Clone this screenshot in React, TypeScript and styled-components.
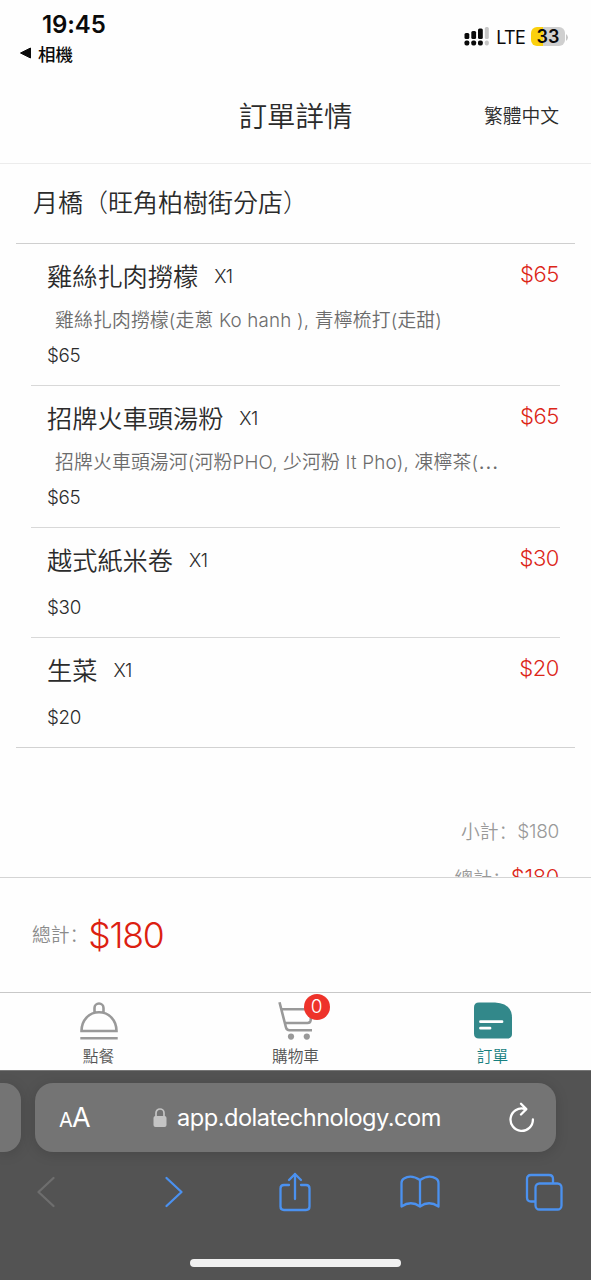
import React from "react";
import styled, { createGlobalStyle } from "styled-components";

const GlobalStyle = createGlobalStyle`
  * { box-sizing: border-box; }
  body {
    margin: 0;
    background: #fefefe;
    font-family: Inter, "Noto Sans CJK TC", sans-serif;
    font-weight: 350;
    color: #2b2b2b;
  }
`;

const Screen = styled.div`
  width: 591px;
  height: 1280px;
  display: flex;
  flex-direction: column;
  overflow: hidden;
`;

const Punct = styled.span`
  font-family: "Noto Sans CJK SC", sans-serif;
  font-weight: 300;
  line-height: 1;
`;

const StatusBar = styled.div`
  height: 70px;
  flex: none;
  display: flex;
  justify-content: space-between;
  padding: 10px 23px 0 19px;
  color: #0a0a0a;
`;

const Clock = styled.div`
  padding-left: 23px;
  font-size: 24px;
  line-height: 30px;
  font-weight: 600;
  letter-spacing: -0.1px;
`;

const BackToApp = styled.div`
  display: flex;
  align-items: center;
  gap: 6px;
  height: 26px;
  font-size: 17.5px;
  font-weight: 500;
`;

const Signals = styled.div`
  display: flex;
  align-items: center;
  height: 24px;
  margin-top: 15px;
`;

const Carrier = styled.span`
  margin-left: 7px;
  font-size: 18px;
  font-weight: 400;
  letter-spacing: -0.75px;
`;

const Battery = styled.span`
  width: 34px;
  height: 19px;
  margin: -2px 1px 0 6px;
  border-radius: 6px;
  background: linear-gradient(90deg, #fbd00d 36%, #cfcfcf 36%);
  font-size: 18px;
  line-height: 20px;
  font-weight: 600;
  text-align: center;
`;

const PageHeader = styled.header`
  height: 94px;
  flex: none;
  display: grid;
  grid-template-columns: 1fr auto 1fr;
  align-items: center;
  padding: 0 32px 4px;
  border-bottom: 1px solid #ececec;
`;

const PageTitle = styled.h1`
  grid-column: 2;
  margin: 0;
  font-size: 28.4px;
  font-weight: 350;
`;

const Language = styled.span`
  justify-self: end;
  font-size: 18.8px;
`;

const Content = styled.main`
  height: 713px;
  flex: none;
  overflow: hidden;
  padding: 0 16px;
`;

const StoreName = styled.h2`
  margin: 0;
  height: 80px;
  padding-left: 17px;
  border-bottom: 1px solid #cfcfcf;
  font-size: 25px;
  line-height: 78px;
  font-weight: 350;
`;

const OrderList = styled.div`
  padding: 0 15px;
  border-bottom: 1px solid #d2d2d2;
`;

const OrderItem = styled.article<{ $detailed: boolean }>`
  height: ${(p) => (p.$detailed ? 142 : 110)}px;
  padding: 15px 1px 0 16px;
  border-bottom: 1px solid #d8d8d8;
  &:last-child { height: 109px; border-bottom: 0; }
`;

const ItemHead = styled.div`
  display: flex;
  align-items: center;
  height: 36px;
`;

const ItemName = styled.span`
  font-size: 25.2px;
  line-height: 36px;
`;

const Quantity = styled.span`
  margin: -2px 0 0 16px;
  font-size: 18.5px;
  letter-spacing: -0.5px;
`;

const ItemTotal = styled.span`
  margin: -7px 0 0 auto;
  color: #dc2618;
  font-size: 22px;
  letter-spacing: -0.4px;
`;

const Options = styled.p`
  width: 452px;
  height: 28px;
  margin: 11px 0 -7px 8px;
  overflow: hidden;
  white-space: nowrap;
  color: #6c6c6c;
  font-size: 18.8px;
  line-height: 29px;
  letter-spacing: 0.19px;
`;

const Ellipsis = styled.span`
  font-size: 24px;
  line-height: 1;
`;

const UnitPrice = styled.div`
  margin-top: 17px;
  font-size: 18.8px;
  line-height: 24px;
  letter-spacing: -0.3px;
`;

const Summary = styled.div`
  padding: 60px 16px 0 0;
`;

const SummaryRow = styled.div`
  height: 47px;
  display: flex;
  justify-content: flex-end;
  align-items: center;
  color: #999;
  font-size: 18.8px;
`;

const SummaryLabel = styled.span`
  margin-top: -2px;
`;

const SummaryValue = styled.span<{ $strong?: boolean }>`
  color: ${(p) => (p.$strong ? "#dc2618" : "#999")};
  font-size: ${(p) => (p.$strong ? 21.9 : 19)}px;
  margin-top: ${(p) => (p.$strong ? -4 : 0)}px;
  letter-spacing: -0.3px;
`;

const TotalBar = styled.section`
  height: 115px;
  flex: none;
  display: flex;
  align-items: center;
  padding: 0 32px;
  border-top: 1px solid #d4d4d4;
  color: #8b8b8b;
  font-size: 18.8px;
`;

const TotalLabel = styled.span`
  margin-top: -4px;
`;

const GrandTotal = styled.span`
  color: #dc2010;
  font-size: 35.5px;
  font-weight: 300;
  letter-spacing: -1.2px;
`;

const TabBar = styled.nav`
  height: 78px;
  flex: none;
  display: grid;
  grid-template-columns: repeat(3, 1fr);
  border-top: 1px solid #c8c8c8;
`;

const Tab = styled.div<{ $active?: boolean }>`
  display: flex;
  flex-direction: column;
  align-items: center;
  padding-top: 8px;
  color: ${(p) => (p.$active ? "#17807f" : "#555")};
  font-size: 15.7px;
  line-height: 26px;
`;

const IconHolder = styled.div`
  position: relative;
  height: 43px;
`;

const Badge = styled.span`
  position: absolute;
  left: 28px;
  top: -7px;
  width: 26px;
  height: 26px;
  border-radius: 50%;
  background: #ee332a;
  color: #fff;
  font-size: 19px;
  line-height: 26px;
  text-align: center;
`;

const Browser = styled.footer`
  height: 210px;
  flex: none;
  display: flex;
  flex-direction: column;
  background: #535353;
  border-top: 1px solid #777;
`;

const AddressRow = styled.div`
  display: flex;
  gap: 14px;
  margin-top: 12px;
`;

const PreviousTab = styled.div`
  width: 21px;
  height: 69px;
  border-radius: 0 17px 17px 0;
  background: #747474;
  box-shadow: 0 2px 14px rgba(0, 0, 0, 0.14);
`;

const AddressBar = styled.div`
  width: 521px;
  height: 69px;
  display: flex;
  align-items: center;
  padding: 0 21px 0 24px;
  border-radius: 18px;
  background: #747474;
  box-shadow: 0 2px 14px rgba(0, 0, 0, 0.14);
  color: #fff;
  font-weight: 400;
`;

const TextSize = styled.span`
  width: 94px;
  font-size: 27px;
  letter-spacing: -0.7px;
  small { font-size: 20px; }
`;

const Url = styled.span`
  flex: 1;
  margin-left: 10px;
  font-size: 23.6px;
  letter-spacing: -0.5px;
`;

const Toolbar = styled.div`
  height: 80px;
  display: flex;
  align-items: center;
  justify-content: space-between;
  padding: 0 28px 0 27px;
`;

const Tool = styled.div`
  width: 38px;
  display: flex;
  justify-content: center;
`;

const HomeIndicator = styled.div`
  width: 211px;
  height: 8px;
  margin: 27px auto 0;
  border-radius: 5px;
  background: #f0f0f0;
`;

const SignalIcon = () => (
  <svg width="26" height="20" viewBox="0 0 26 20" fill="#0a0a0a">
    <rect x="1.500" y="6" width="4.800" height="6" rx="1.500" />
    <rect x="8.300" y="4" width="4.800" height="8" rx="1.500" />
    <rect x="15" y="1.500" width="4.800" height="10.500" rx="1.500" />
    <rect x="21.800" y="0" width="4" height="12" rx="1.500" fill="#c6c6c6" />
    <rect x="1.500" y="13.500" width="4.800" height="5" rx="1.800" />
    <rect x="8.300" y="13.500" width="4.800" height="5" rx="1.800" />
    <rect x="15" y="13.500" width="4.800" height="5" rx="1.800" />
    <rect x="21.800" y="13.500" width="4" height="5" rx="1.800" fill="#c6c6c6" />
  </svg>
);

const ClocheIcon = () => (
  <svg width="38" height="40" viewBox="0 0 38 40" fill="none" stroke="#999" strokeWidth="2.600">
    <path d="M14.500 11.500V7a4.500 4.500 0 0 1 9 0V11.500M1.500 30C1.500 19 9 11.300 19 11.300S36.500 19 36.500 30ZM0.300 37.300H37.700" />
  </svg>
);

const CartIcon = () => (
  <svg width="40" height="40" viewBox="0 0 40 40" fill="none" stroke="#999" strokeWidth="2.600">
    <path d="M3.500 1.300 10 26.500Q10.700 29.300 13.500 29.300H36M6 8.300H36L34.600 19.500Q34.200 22 31.500 22H9" />
    <circle cx="15" cy="35.600" r="3.100" fill="#999" stroke="none" />
    <circle cx="30.800" cy="35.600" r="3.100" fill="#999" stroke="none" />
  </svg>
);

const OrderIcon = () => (
  <svg width="38" height="40" viewBox="0 0 38 40">
    <path d="M5 1.500H21Q38 2.500 38 17V33Q38 37.500 33 37.500H5Q0 37.500 0 32.500V6.500Q0 1.500 5 1.500Z" fill="#32888a" />
    <path d="M6.500 20.700H28M6.500 27.200H16" stroke="#fff" strokeWidth="2.800" strokeLinecap="round" />
  </svg>
);

const LockIcon = () => (
  <svg width="14" height="20" viewBox="0 0 14 20">
    <path d="M3 9V5a4 4 0 0 1 8 0V9" fill="none" stroke="#c4c4c4" strokeWidth="1.700" />
    <rect x="0.500" y="8" width="13" height="11" rx="2" fill="#c4c4c4" />
  </svg>
);

const ReloadIcon = () => (
  <svg width="26" height="32" viewBox="0 0 26 32" fill="none" stroke="#fff" strokeWidth="2.300" strokeLinecap="round" strokeLinejoin="round">
    <path d="M15.500 6.800A11.200 11.200 0 1 0 23.900 17.500M12 1.700 17.300 7.100 12 12.500" />
  </svg>
);

const ToolIcon = styled.svg<{ $disabled?: boolean }>`
  flex: none;
  fill: none;
  stroke: ${(p) => (p.$disabled ? "#6e6e6e" : "#4b91ef")};
  stroke-width: 2.3;
  stroke-linecap: round;
  stroke-linejoin: round;
`;

const items = [
  { name: "雞絲扎肉撈檬", price: "$65", options: "雞絲扎肉撈檬(走蔥 Ko hanh ), 青檸梳打(走甜)" },
  { name: "招牌火車頭湯粉", price: "$65", options: "招牌火車頭湯河(河粉PHO, 少河粉 It Pho), 凍檸茶(", truncated: true },
  { name: "越式紙米卷", price: "$30" },
  { name: "生菜", price: "$20" },
];

export default function App() {
  return (
    <Screen lang="zh-Hant">
      <GlobalStyle />
      <StatusBar>
        <div>
          <Clock>19:45</Clock>
          <BackToApp>
            <svg width="13" height="12" viewBox="0 0 13 12"><path d="M1.500 6 11.500 1V11Z" fill="#0a0a0a" stroke="#0a0a0a" strokeLinejoin="round" /></svg>
            相機
          </BackToApp>
        </div>
        <Signals>
          <SignalIcon />
          <Carrier>LTE</Carrier>
          <Battery>33</Battery>
          <svg width="2" height="7" viewBox="0 0 2 7"><path d="M0 0Q4 3.500 0 7Z" fill="#c6c6c6" /></svg>
        </Signals>
      </StatusBar>

      <PageHeader>
        <PageTitle>訂單詳情</PageTitle>
        <Language>繁體中文</Language>
      </PageHeader>

      <Content>
        <StoreName>月橋<Punct lang="zh-Hans">（</Punct>旺角柏樹街分店<Punct lang="zh-Hans">）</Punct></StoreName>
        <OrderList>
          {items.map((item) => (
            <OrderItem key={item.name} $detailed={!!item.options}>
              <ItemHead>
                <ItemName>{item.name}</ItemName>
                <Quantity>X1</Quantity>
                <ItemTotal>{item.price}</ItemTotal>
              </ItemHead>
              {item.options && (
                <Options>
                  {item.options}
                  {item.truncated && <Ellipsis>…</Ellipsis>}
                </Options>
              )}
              <UnitPrice>{item.price}</UnitPrice>
            </OrderItem>
          ))}
        </OrderList>
        <Summary>
          <SummaryRow>
            <SummaryLabel>小計<Punct lang="zh-Hans">：</Punct></SummaryLabel>
            <SummaryValue>$180</SummaryValue>
          </SummaryRow>
          <SummaryRow>
            <SummaryLabel>總計<Punct lang="zh-Hans">：</Punct></SummaryLabel>
            <SummaryValue $strong>$180</SummaryValue>
          </SummaryRow>
        </Summary>
      </Content>

      <TotalBar>
        <TotalLabel>總計<Punct lang="zh-Hans">：</Punct></TotalLabel>
        <GrandTotal>$180</GrandTotal>
      </TotalBar>

      <TabBar>
        <Tab><IconHolder><ClocheIcon /></IconHolder>點餐</Tab>
        <Tab><IconHolder><CartIcon /><Badge>0</Badge></IconHolder>購物車</Tab>
        <Tab $active><IconHolder><OrderIcon /></IconHolder>訂單</Tab>
      </TabBar>

      <Browser>
        <AddressRow>
          <PreviousTab />
          <AddressBar>
            <TextSize><small>A</small>A</TextSize>
            <LockIcon />
            <Url>app.dolatechnology.com</Url>
            <ReloadIcon />
          </AddressBar>
        </AddressRow>
        <Toolbar>
          <Tool><ToolIcon $disabled width="22" height="32" viewBox="0 0 22 32"><path d="M18.500 2 3.500 16 18.500 30" /></ToolIcon></Tool>
          <Tool><ToolIcon width="26" height="32" viewBox="0 0 26 32"><path d="M8.500 2 23.500 16 8.500 30" /></ToolIcon></Tool>
          <Tool><ToolIcon width="32" height="40" viewBox="0 0 32 40"><path d="M10 13H5Q1.500 13 1.500 16.500V34.500Q1.500 38 5 38H27Q30.500 38 30.500 34.500V16.500Q30.500 13 27 13H22M16 27V2M10 8 16 2 22 8" /></ToolIcon></Tool>
          <Tool><ToolIcon width="40" height="34" viewBox="0 0 40 34"><path d="M20 5Q11-1 4 3.500Q1.500 5 1.500 8V31.500Q11 25 20 31.500Q29 25 38.500 31.500V8Q38.500 5 36 3.500Q29-1 20 5V31.500" /></ToolIcon></Tool>
          <Tool><ToolIcon width="38" height="38" viewBox="0 0 38 38"><rect x="10.500" y="10.500" width="26" height="26" rx="4" /><path d="M10 28.500H6Q2 28.500 2 24.500V6Q2 2 6 2H24Q28 2 28 6V10" /></ToolIcon></Tool>
        </Toolbar>
        <HomeIndicator />
      </Browser>
    </Screen>
  );
}
